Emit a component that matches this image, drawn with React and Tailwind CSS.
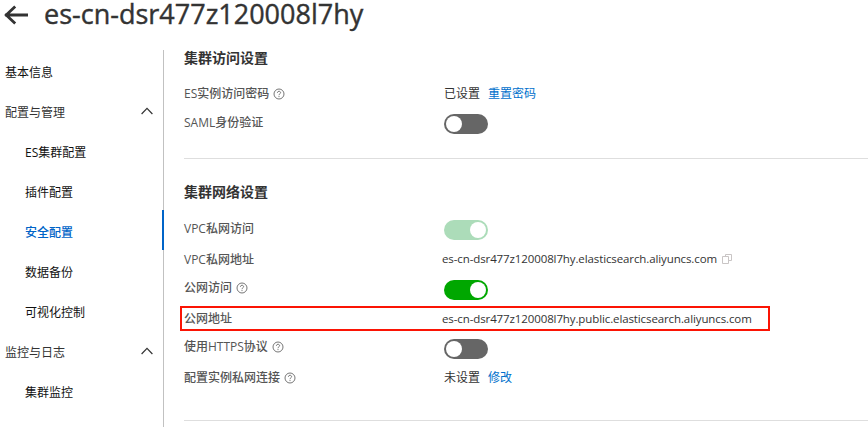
import React from 'react';

const LATIN = "font-['Open_Sans','Noto_Sans_CJK_SC',sans-serif]";

function BackArrow() {
  return (
    <svg width="26" height="22" viewBox="0 0 26 22" fill="none" stroke="#333" strokeWidth="2.8">
      <path d="M2 11H25M12.2 2.4L3.2 11L12.2 19.6" />
    </svg>
  );
}

function Chevron() {
  return (
    <svg width="12" height="8" viewBox="0 0 12 8" fill="none" stroke="#333" strokeWidth="1.2">
      <path d="M.6 7L6 1.4L11.4 7" />
    </svg>
  );
}

function Help() {
  return (
    <svg className="ml-[4px] shrink-0" width="12" height="12" viewBox="0 0 12 12" fill="none" stroke="#666" strokeWidth="0.9">
      <circle cx="6" cy="6" r="5" />
      <path d="M4.4 4.8C4.4 2.7 7.6 2.8 7.6 4.7C7.6 5.8 6 5.8 6 7.2M6 8.1V9.1" />
    </svg>
  );
}

function Copy() {
  return (
    <svg className="ml-[5px] shrink-0" width="10" height="10" viewBox="0 0 10 10" fill="none" stroke="#c9c5c5" strokeWidth="1">
      <path d="M3.5 2.5V.5H9.5V6.5H7M.5 2.5H6.5V9.5H.5Z" />
    </svg>
  );
}

function Toggle({ on, disabled }) {
  const color = disabled ? 'bg-[#acdcb9]' : on ? 'bg-[#00a700]' : 'bg-[#666]';
  return (
    <span className={`flex h-5 w-11 items-center rounded-full px-0.5 ${color} ${on ? 'justify-end' : 'justify-start'}`}>
      <span className="size-4 rounded-full bg-white" />
    </span>
  );
}

function NavItem({ label, group, child, active }) {
  return (
    <li
      className={`flex h-10 items-center justify-between pt-1.5 pr-[10px] ${child ? 'pl-[25px]' : 'pl-[5px]'} ${
        active ? 'border-r-2 border-[#0064c8] font-medium text-[#0064c8]' : 'mr-px'
      } ${group ? 'text-[#333]' : active ? '' : 'text-[#111]'}`}
    >
      <span>{label}</span>
      {group && <span className="mb-[5px]"><Chevron /></span>}
    </li>
  );
}

function Row({ label, help, className = 'h-[30px]', labelClass = '', children }) {
  return (
    <div className={`flex items-center ${className}`}>
      <div className={`flex w-[260px] shrink-0 items-center font-medium text-[#555] ${labelClass}`}>
        <span>{label}</span>
        {help && <Help />}
      </div>
      {children}
    </div>
  );
}

function Heading({ children }) {
  return <h2 className="h-4 text-[14px] leading-4 font-bold text-[#333]">{children}</h2>;
}

export default function App() {
  return (
    <div className={`h-[427px] w-[868px] overflow-hidden bg-white text-[12px] leading-4 text-[#333] ${LATIN}`}>
      <header className="flex h-[50px] items-start pl-[3px]">
        <span className="pt-[4px]"><BackArrow /></span>
        <h1 className="ml-[15px] text-[27px] leading-[28px] font-medium whitespace-nowrap [-webkit-text-stroke:0.4px_#333]">
          es-cn-dsr477z120008l7hy
        </h1>
      </header>
      <div className="flex h-[377px]">
        <nav className="w-[164px] shrink-0 border-r border-[#c1c1c1]">
          <ul className="-mr-px">
            <NavItem label="基本信息" />
            <NavItem label="配置与管理" group />
            <NavItem label="ES集群配置" child />
            <NavItem label="插件配置" child />
            <NavItem label="安全配置" child active />
            <NavItem label="数据备份" child />
            <NavItem label="可视化控制" child />
            <NavItem label="监控与日志" group />
            <NavItem label="集群监控" child />
          </ul>
        </nav>
        <main className="ml-5 min-w-0 flex-1">
          <section className="h-[109px] border-b border-[#dedede]">
            <Heading>集群访问设置</Heading>
            <div className="pt-3">
              <Row label="ES实例访问密码" help className="h-[30px] pt-[2px]">
                <span>已设置</span>
                <a className="ml-2 text-[#0070cc]">重置密码</a>
              </Row>
              <Row label="SAML身份验证">
                <span className="mt-[2px]"><Toggle /></span>
              </Row>
            </div>
          </section>
          <section className="h-[262px] border-b border-[#dedede] pt-[25px]">
            <Heading>集群网络设置</Heading>
            <div className="pt-[13px]">
              <Row label="VPC私网访问" labelClass="pt-px">
                <span className="mt-[4px]"><Toggle on disabled /></span>
              </Row>
              <Row label="VPC私网地址" className="h-[31px] pt-px" labelClass="pt-px">
                <span className="-ml-[2px] text-[11.5px] tracking-[-0.11px]">es-cn-dsr477z120008l7hy.elasticsearch.aliyuncs.com</span>
                <Copy />
              </Row>
              <Row label="公网访问" help className="h-[29px]" labelClass="-mt-px">
                <span className="mt-[3px]"><Toggle on /></span>
              </Row>
              <Row label="公网地址" className="mt-[3px] -ml-[4px] h-[25px] w-[590px] border-2 border-[#fb1404] pl-[2px]">
                <span className="-ml-[2px] text-[11.5px] tracking-[-0.11px]">es-cn-dsr477z120008l7hy.public.elasticsearch.aliyuncs.com</span>
              </Row>
              <Row label="使用HTTPS协议" help className="h-[31px]">
                <span className="mt-[4px]"><Toggle /></span>
              </Row>
              <Row label="配置实例私网连接" help className="h-[30px] pt-[2px]">
                <span>未设置</span>
                <a className="ml-2 text-[#0070cc]">修改</a>
              </Row>
            </div>
          </section>
        </main>
      </div>
    </div>
  );
}
